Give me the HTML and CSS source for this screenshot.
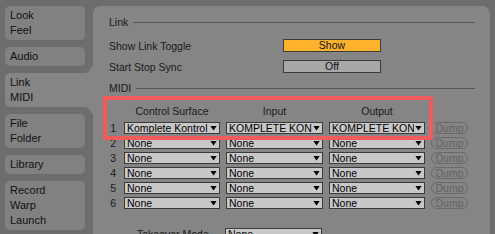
FILE: index.html
```html
<!DOCTYPE html>
<html>
<head>
<meta charset="utf-8">
<link rel="stylesheet" href="styles.css">
</head>
<body>
<div class="app">
  <nav class="sidebar">
    <div class="tab">Look<br>Feel</div>
    <div class="tab">Audio</div>
    <div class="tab selected">Link<br>MIDI</div>
    <div class="tab">File<br>Folder</div>
    <div class="tab">Library</div>
    <div class="tab">Record<br>Warp<br>Launch</div>
  </nav>
  <main class="panel">
    <div class="section-head"><span>Link</span><div class="rule"></div></div>
    <div class="pref-row first">
      <div class="label">Show Link Toggle</div>
      <div class="toggle on">Show</div>
    </div>
    <div class="pref-row">
      <div class="label">Start Stop Sync</div>
      <div class="toggle">Off</div>
    </div>
    <div class="section-head midi"><span>MIDI</span><div class="rule"></div></div>
    <div class="midi-table">
      <div class="num"></div>
      <div class="col-head">Control Surface</div>
      <div class="col-head">Input</div>
      <div class="col-head">Output</div>
      <div></div>

      <div class="num">1</div>
      <div class="select"><span class="val">Komplete Kontrol</span><span class="arrow"></span></div>
      <div class="select"><span class="val">KOMPLETE KONTROL - 1</span><span class="arrow"></span></div>
      <div class="select"><span class="val">KOMPLETE KONTROL - 1</span><span class="arrow"></span></div>
      <div class="dump">Dump</div>

      <div class="num">2</div>
      <div class="select"><span class="val">None</span><span class="arrow"></span></div>
      <div class="select"><span class="val">None</span><span class="arrow"></span></div>
      <div class="select"><span class="val">None</span><span class="arrow"></span></div>
      <div class="dump">Dump</div>

      <div class="num">3</div>
      <div class="select"><span class="val">None</span><span class="arrow"></span></div>
      <div class="select"><span class="val">None</span><span class="arrow"></span></div>
      <div class="select"><span class="val">None</span><span class="arrow"></span></div>
      <div class="dump">Dump</div>

      <div class="num">4</div>
      <div class="select"><span class="val">None</span><span class="arrow"></span></div>
      <div class="select"><span class="val">None</span><span class="arrow"></span></div>
      <div class="select"><span class="val">None</span><span class="arrow"></span></div>
      <div class="dump">Dump</div>

      <div class="num">5</div>
      <div class="select"><span class="val">None</span><span class="arrow"></span></div>
      <div class="select"><span class="val">None</span><span class="arrow"></span></div>
      <div class="select"><span class="val">None</span><span class="arrow"></span></div>
      <div class="dump">Dump</div>

      <div class="num">6</div>
      <div class="select"><span class="val">None</span><span class="arrow"></span></div>
      <div class="select"><span class="val">None</span><span class="arrow"></span></div>
      <div class="select"><span class="val">None</span><span class="arrow"></span></div>
      <div class="dump">Dump</div>

      <div class="highlight"></div>
    </div>
    <div class="takeover">
      <div class="takeover-label">Takeover Mode</div>
      <div class="select wide"><span class="val">None</span><span class="arrow"></span></div>
    </div>
  </main>
</div>
</body>
</html>
```

FILE: styles.css
```css
* { box-sizing: border-box; }

html, body {
  margin: 0;
  padding: 0;
}

body {
  width: 495px;
  height: 234px;
  overflow: hidden;
  background: #6d6d6d;
  font-family: "Liberation Sans", Arial, sans-serif;
  font-size: 10.5px;
  color: #1a1a1a;
}

.app {
  display: flex;
  align-items: flex-start;
  padding: 6px 5px 0 5px;
  height: 234px;
  overflow: hidden;
}

.sidebar {
  width: 80px;
  flex: none;
  display: flex;
  flex-direction: column;
  gap: 7px;
  font-size: 11px;
}

.tab {
  background: #818181;
  border-radius: 5px;
  padding: 2px 0 2px 5px;
  line-height: 15px;
  color: #111;
}

.tab.selected {
  background: #858585;
  margin-right: -8px;
  border-radius: 5px 0 0 5px;
  position: relative;
}

.tab.selected::before,
.tab.selected::after {
  content: "";
  position: absolute;
  right: 0;
  width: 8px;
  height: 6px;
}

.tab.selected::before {
  top: -6px;
  background: radial-gradient(circle at 0 0, transparent 5.5px, #858585 6px);
}

.tab.selected::after {
  bottom: -6px;
  background: radial-gradient(circle at 0 100%, transparent 5.5px, #858585 6px);
}

.panel {
  flex: 1;
  margin-left: 8px;
  height: 228px;
  overflow: hidden;
  background: #858585;
  border-radius: 8px 8px 0 0;
  padding: 9px 15px 0 16px;
}

.section-head {
  display: flex;
  align-items: center;
  height: 14px;
  line-height: 14px;
}

.section-head .rule {
  flex: 1;
  height: 1px;
  background: #575757;
  margin-left: 5px;
}

.section-head.midi {
  margin-top: 8px;
}

.pref-row {
  display: flex;
  align-items: center;
  height: 13px;
  margin-top: 8px;
}

.pref-row.first {
  margin-top: 10px;
}

.label {
  width: 174px;
}

.toggle {
  width: 98px;
  height: 13px;
  border: 1px solid #3a3a3a;
  background: #a8a8a8;
  text-align: center;
  line-height: 11px;
  color: #111;
}

.toggle.on {
  background: #ffb22e;
}

.midi-table {
  position: relative;
  margin-top: 9px;
  display: grid;
  grid-template-columns: 9px 96px 97px 96px 37px;
  grid-template-rows: 15px repeat(6, 12px);
  column-gap: 6px;
  row-gap: 3px;
}

.num {
  text-align: right;
  padding-right: 2px;
  line-height: 12px;
}

.col-head {
  text-align: center;
  line-height: 15px;
}

.select {
  display: flex;
  align-items: center;
  height: 12px;
  border: 1px solid #3a3a3a;
  background: #c8c8c8;
  color: #000;
  padding-left: 2px;
  line-height: 10px;
  overflow: hidden;
}

.select .val {
  flex: 1;
  min-width: 0;
  white-space: nowrap;
  overflow: hidden;
}

.select .arrow {
  flex: none;
  width: 7px;
  height: 5px;
  margin: 0 2px 0 1px;
  background: #000;
  clip-path: polygon(0 0, 100% 0, 50% 100%);
}

.dump {
  height: 12px;
  border: 1px solid #6a6a6a;
  border-radius: 6px;
  color: #636363;
  text-align: center;
  line-height: 10px;
}

.highlight {
  position: absolute;
  left: -6px;
  top: -8px;
  width: 330px;
  height: 44px;
  border: 4px solid #f25b5b;
  pointer-events: none;
}

.takeover {
  display: flex;
  align-items: center;
  margin-top: 19px;
  padding-left: 28px;
}

.takeover-label {
  width: 88px;
}

.select.wide {
  width: 97px;
}
```
